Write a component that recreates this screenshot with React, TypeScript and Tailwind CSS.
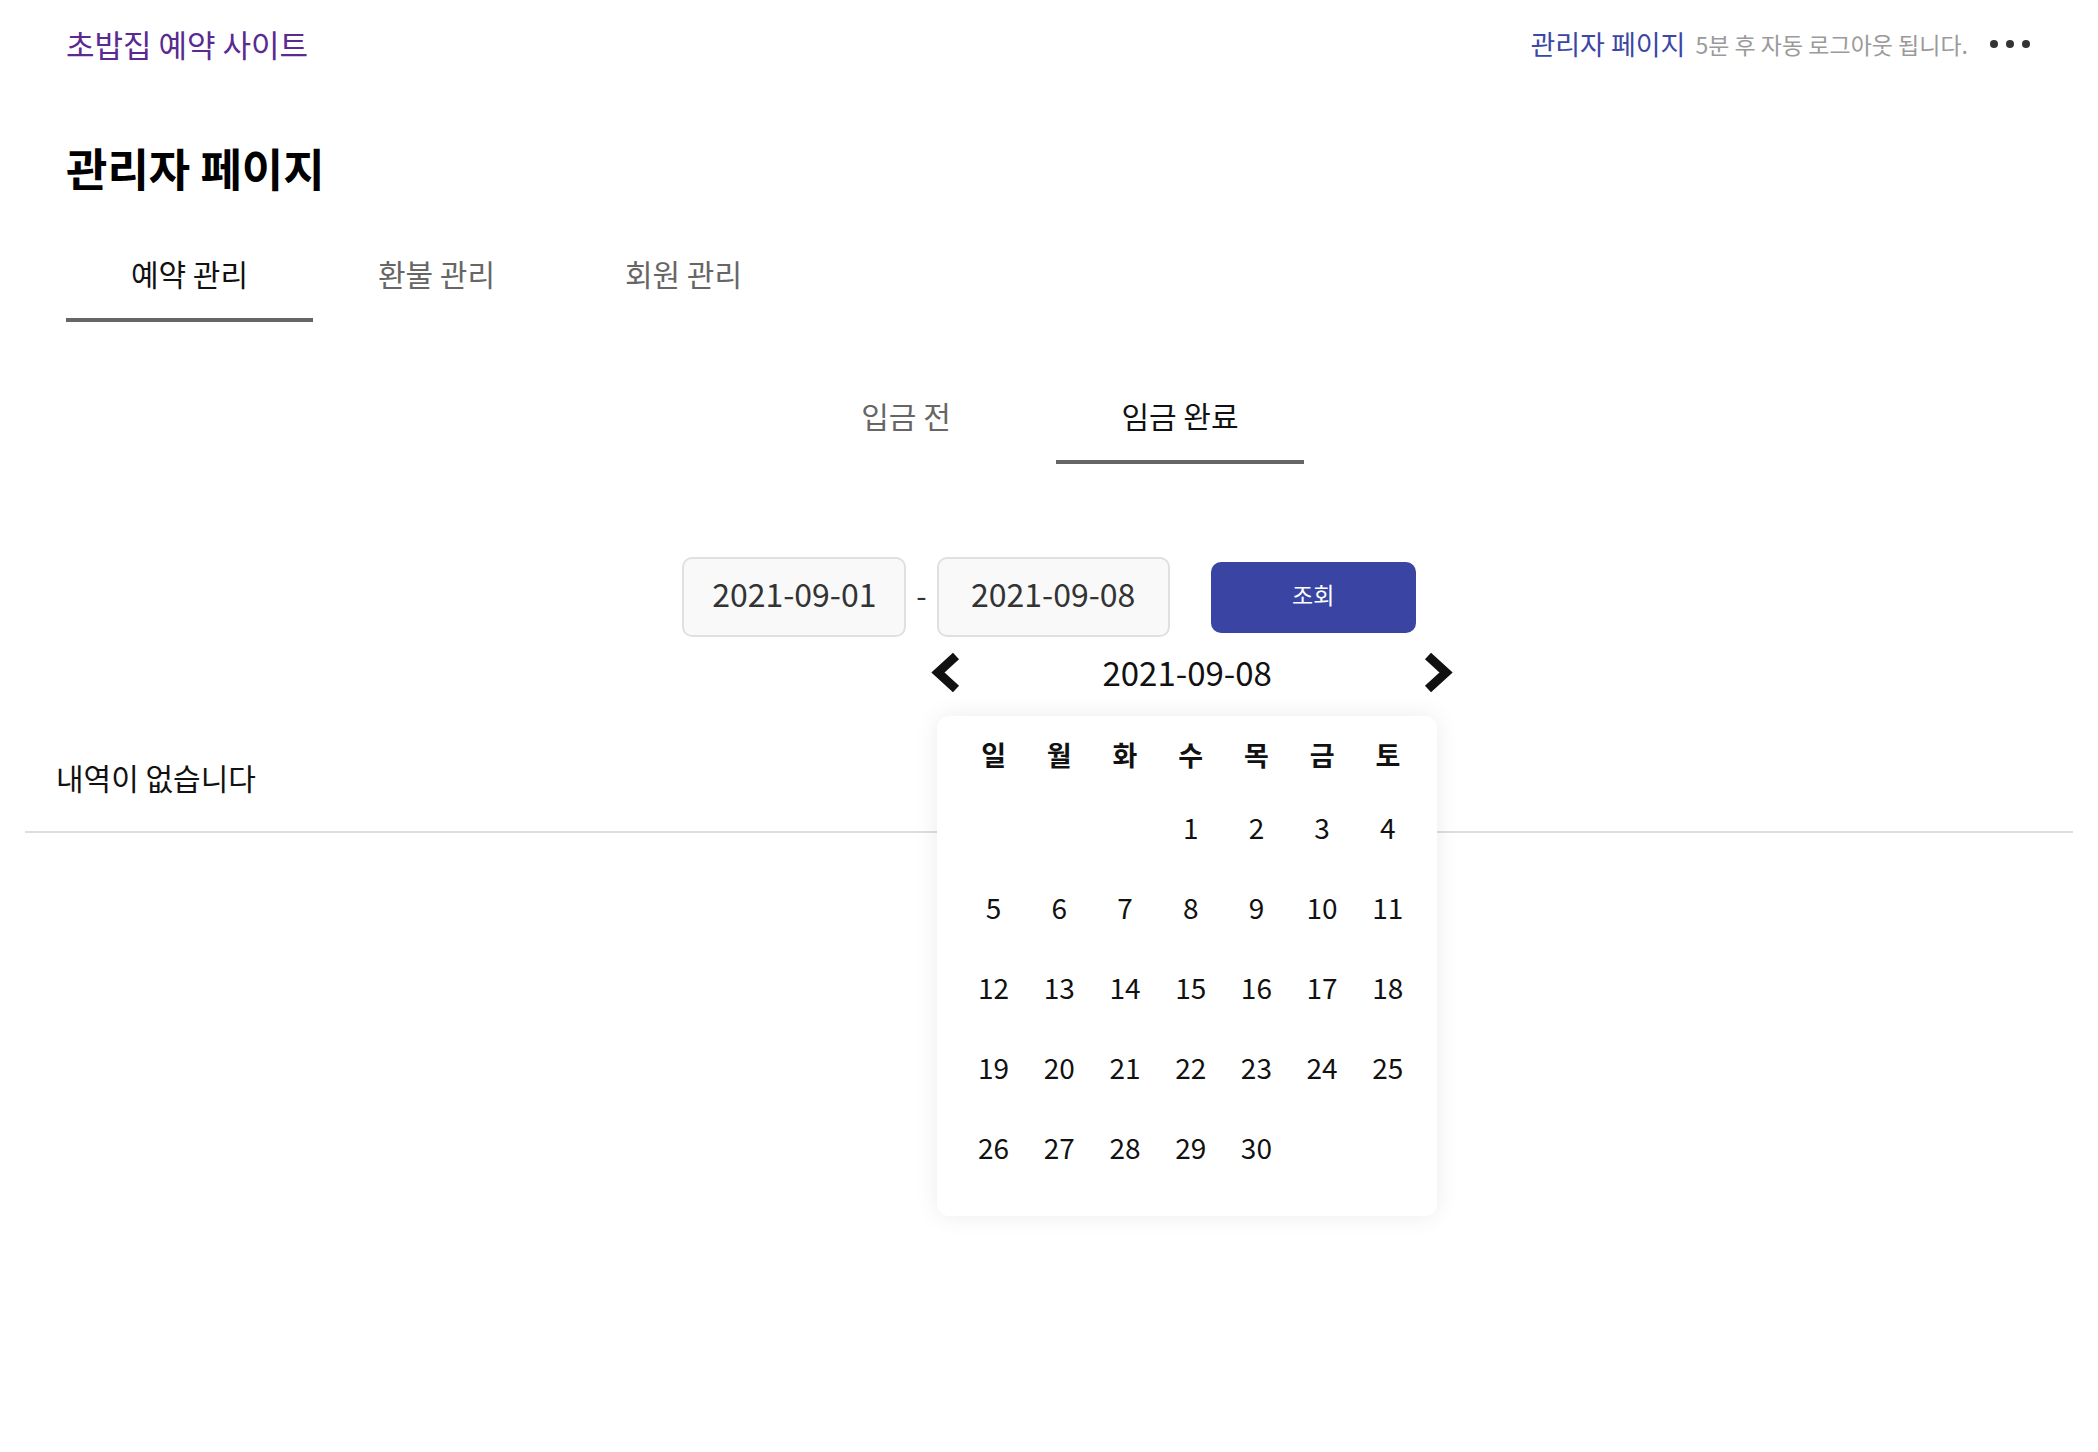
import React from "react";

const days: (number | null)[] = [null, null, null, ...Array.from({ length: 30 }, (_, i) => i + 1)];
const weekdays = ["일", "월", "화", "수", "목", "금", "토"];

function ChevronLeft() {
  return (
    <svg width="30" height="41" viewBox="0 0 30 41" className="shrink-0">
      <polyline points="25,4 7,20.5 25,37" fill="none" stroke="#111" strokeWidth="9" strokeLinejoin="miter" strokeLinecap="butt" />
    </svg>
  );
}

function ChevronRight() {
  return (
    <svg width="29" height="41" viewBox="0 0 29 41" className="shrink-0">
      <polyline points="4,4 22,20.5 4,37" fill="none" stroke="#111" strokeWidth="9" strokeLinejoin="miter" strokeLinecap="butt" />
    </svg>
  );
}

export default function App() {
  return (
    <div className="min-h-screen bg-white font-['Noto_Sans_CJK_KR','Noto_Sans',sans-serif] text-[#111]">
      <header className="flex h-[88px] items-center justify-between pl-[66px] pr-[68px]">
        <span className="text-[31px] leading-[40px] text-[#5a2a90]">초밥집 예약 사이트</span>
        <div className="flex items-center">
          <span className="text-[27px] leading-[32px] text-[#3b47a6]">관리자 페이지</span>
          <span className="ml-[10px] text-[23px] leading-[32px] text-[#9a9a9a]">5분 후 자동 로그아웃 됩니다.</span>
          <div className="ml-[22px] flex gap-[8px]">
            <span className="h-[8px] w-[8px] rounded-full bg-[#333]" />
            <span className="h-[8px] w-[8px] rounded-full bg-[#333]" />
            <span className="h-[8px] w-[8px] rounded-full bg-[#333]" />
          </div>
        </div>
      </header>

      <h1 className="mt-[52px] pl-[66px] text-[45px] font-bold leading-[56px] text-black">관리자 페이지</h1>

      <nav className="mt-[60px] flex pl-[66px]">
        <div className="w-[247px] border-b-4 border-[#666] pb-[28px] text-center text-[30px] leading-[34px] text-[#111]">예약 관리</div>
        <div className="w-[247px] border-b-4 border-transparent pb-[28px] text-center text-[30px] leading-[34px] text-[#666]">환불 관리</div>
        <div className="w-[247px] border-b-4 border-transparent pb-[28px] text-center text-[30px] leading-[34px] text-[#666]">회원 관리</div>
      </nav>

      <div className="mt-[76px] flex justify-center gap-[26px] pr-[12px]">
        <div className="w-[248px] border-b-4 border-transparent pb-[28px] text-center text-[30px] leading-[34px] text-[#666]">입금 전</div>
        <div className="w-[248px] border-b-4 border-[#666] pb-[28px] text-center text-[30px] leading-[34px] text-[#111]">임금 완료</div>
      </div>

      <div className="mt-[93px] flex items-center justify-center">
        <div className="flex h-[80px] w-[224px] items-center justify-center rounded-[10px] border-2 border-[#e0e0e0] bg-[#f9f9f9] pb-[8px] text-[32px] text-[#333]">
          2021-09-01
        </div>
        <span className="mx-[10px] pb-[6px] text-[30px] text-[#333]">-</span>
        <div className="relative">
          <div className="flex h-[80px] w-[233px] items-center justify-center rounded-[10px] border-2 border-[#e0e0e0] bg-[#f9f9f9] pb-[8px] text-[32px] text-[#333]">
            2021-09-08
          </div>
          <div className="absolute left-0 top-full z-10">
            <div className="-ml-[6px] mt-[15px] flex h-[41px] w-[522px] items-center">
              <ChevronLeft />
              <div className="flex-1 pr-[10px] text-center text-[33px] leading-[41px] text-[#111]">2021-09-08</div>
              <ChevronRight />
            </div>
            <div className="mt-[23px] h-[500px] w-[500px] rounded-[12px] bg-white pl-[24px] pr-[16px] pt-[19px] shadow-[0_0_24px_rgba(0,0,0,0.08)]">
              <div className="grid grid-cols-7">
                {weekdays.map((w) => (
                  <div key={w} className="flex h-[40px] items-center justify-center text-[27px] font-bold text-[#111]">
                    {w}
                  </div>
                ))}
              </div>
              <div className="mt-[12px] grid grid-cols-7">
                {days.map((d, i) => (
                  <div key={i} className="flex h-[80px] items-center justify-center text-[28px] text-[#111]">
                    {d ?? ""}
                  </div>
                ))}
              </div>
            </div>
          </div>
        </div>
        <button className="ml-[41px] h-[71px] w-[205px] rounded-[10px] bg-[#3a45a3] pb-[6px] text-[23px] text-white">조회</button>
      </div>

      <div className="mx-[25px] mt-[80px] border-b-2 border-[#dddddd] pb-[34px] pl-[31px] pt-[40px]">
        <span className="text-[30px] leading-[40px] text-[#111]">내역이 없습니다</span>
      </div>
    </div>
  );
}
